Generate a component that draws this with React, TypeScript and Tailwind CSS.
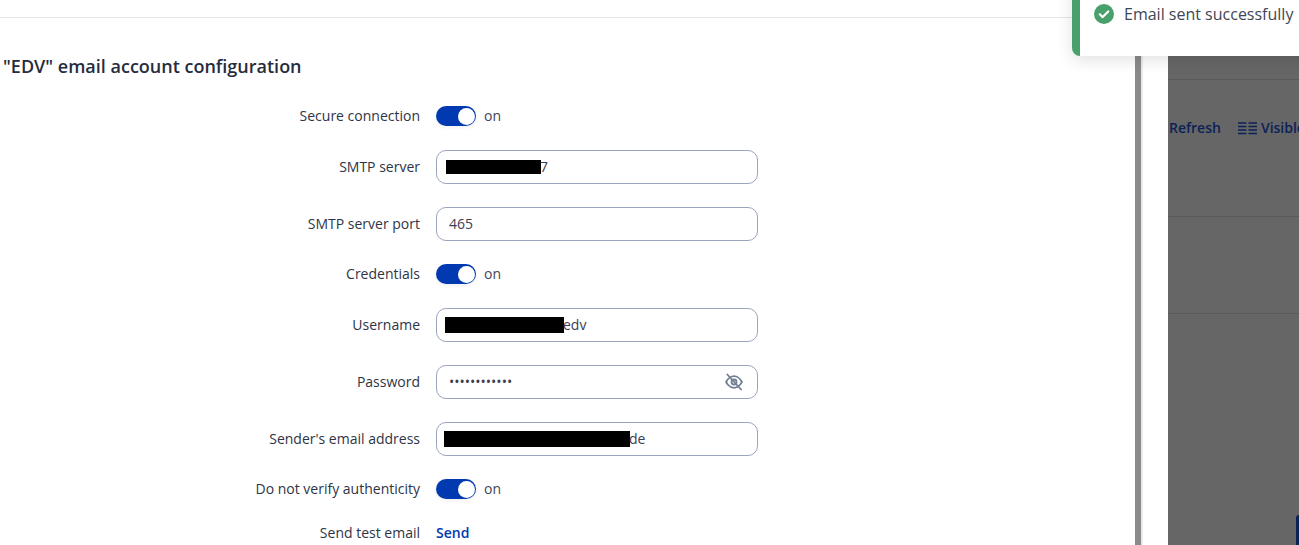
import React from "react";

const font = { fontFamily: '"Open Sans", "Noto Sans", sans-serif' };

function Row({ label, mt, children }: { label: string; mt: string; children: React.ReactNode }) {
  return (
    <div className={`flex items-center ${mt}`}>
      <div className="w-[420px] shrink-0 whitespace-nowrap text-right text-[14px] leading-[20px] text-[#2e3445]">{label}</div>
      <div className="ml-4 flex items-center">{children}</div>
    </div>
  );
}

function Toggle() {
  return (
    <div className="flex items-center">
      <div className="flex h-[20px] w-[40px] items-center justify-end rounded-full bg-[#0039b0] pr-[1px] shadow-[0_2px_4px_rgba(0,0,0,0.06)]">
        <div className="h-[17px] w-[17px] rounded-full bg-white" />
      </div>
      <span className="ml-2 text-[14px] leading-[20px] text-[#3f4656]">on</span>
    </div>
  );
}

function Field({ children }: { children?: React.ReactNode }) {
  return (
    <div className="flex h-[34px] w-[322px] items-center rounded-[10px] border border-[#9aa5bd] bg-white pb-[1px] text-[14px] text-[#3a4050]">
      {children}
    </div>
  );
}

function Redact({ width, ml, h }: { width: string; ml: string; h: string }) {
  return <div className={`${width} ${ml} ${h} mt-[1px] bg-black`} />;
}

export default function App() {
  return (
    <div style={font} className="relative flex h-[545px] w-[1299px] overflow-hidden bg-white">
      <div className="w-[1135px] shrink-0">
        <div className="h-[18px] border-b border-[#e4e4e6]" />
        <h2 className="ml-[3px] mt-[37px] h-[23px] text-[18px] font-semibold leading-[23px] text-[#262c3d]">
          "EDV" email account configuration
        </h2>
        <div className="mt-[28px]">
          <Row label="Secure connection" mt="mt-0"><Toggle /></Row>
          <Row label="SMTP server" mt="mt-[24px]">
            <Field>
              <Redact width="w-[95px]" ml="ml-[9px]" h="h-[14px]" />
              <span className="-ml-[1px]">7</span>
            </Field>
          </Row>
          <Row label="SMTP server port" mt="mt-[23px]">
            <Field><span className="ml-3">465</span></Field>
          </Row>
          <Row label="Credentials" mt="mt-[23px]"><Toggle /></Row>
          <Row label="Username" mt="mt-[24px]">
            <Field>
              <Redact width="w-[119px]" ml="ml-[8px]" h="h-[16px]" />
              <span className="-ml-[1px]">edv</span>
            </Field>
          </Row>
          <Row label="Password" mt="mt-[23px]">
            <Field>
              <span className="ml-3 flex-1 text-[14px]">••••••••••••</span>
              <svg className="mr-[13px] mt-[1px]" width="20" height="20" viewBox="0 0 24 24" fill="none" stroke="#737f94" strokeWidth="2.2" strokeLinecap="round" strokeLinejoin="round">
                <path d="M2.5 12s3.5-7 9.5-7 9.5 7 9.5 7-3.5 7-9.5 7-9.5-7-9.5-7Z" />
                <circle cx="12" cy="12" r="3" />
                <path d="M4 3l16.5 18" />
              </svg>
            </Field>
          </Row>
          <Row label="Sender's email address" mt="mt-[23px]">
            <Field>
              <Redact width="w-[186px]" ml="ml-[7px]" h="h-[16px]" />
              <span className="-ml-[1px]">de</span>
            </Field>
          </Row>
          <Row label="Do not verify authenticity" mt="mt-[23px]"><Toggle /></Row>
          <Row label="Send test email" mt="mt-[24px]">
            <span className="text-[14px] font-semibold leading-[20px] text-[#0039b0]">Send</span>
          </Row>
        </div>
      </div>

      <div className="w-[6px] shrink-0 bg-[#8a8a8a]" />
      <div className="w-[27px] shrink-0 border-l-2 border-[#e6ecee] bg-white" />

      <div className="min-w-0 flex-1 overflow-hidden bg-[#666666]">
        <div className="h-[80px] border-b border-[#5a5a5a]" />
        <div className="flex h-[137px] items-start border-b border-[#5a5a5a] pt-[38px] text-[14px] font-semibold leading-[20px] text-[#0b2257]">
          <span className="ml-[1px] whitespace-nowrap">Refresh</span>
          <svg className="ml-[17px] mt-[3px] shrink-0" width="19" height="14" viewBox="0 0 19 14" stroke="#0b2257" strokeWidth="1.6" fill="none">
            <path d="M0 2h8.5M0 5.5h8.5M0 9h8.5M0 12.5h8.5M10.5 2h8.5M10.5 5.5h8.5M10.5 9h8.5M10.5 12.5h8.5" />
          </svg>
          <span className="ml-[4px] whitespace-nowrap">Visible</span>
        </div>
        <div className="h-[97px] border-b border-[#5a5a5a]" />
      </div>

      <div className="absolute bottom-0 right-0 top-[515px] w-[3px] rounded-tl-[3px] bg-[#0b2257]" />

      <div className="absolute left-[1072px] top-[-20px] flex h-[76px] w-[260px] rounded-[8px] border-l-[8px] border-[#4aa06c] bg-white shadow-[0_4px_16px_rgba(0,0,0,0.12)]">
        <div className="ml-[14px] mt-[24px] flex items-start">
          <svg width="20" height="20" viewBox="0 0 20 20" className="shrink-0">
            <circle cx="10" cy="10" r="10" fill="#4aa06c" />
            <path d="M5.8 10.3l2.9 2.8 5.5-5.6" fill="none" stroke="#fff" strokeWidth="2.2" strokeLinecap="round" strokeLinejoin="round" />
          </svg>
          <span className="ml-[10px] whitespace-nowrap text-[16px] leading-[20px] text-[#3f4656]">Email sent successfully</span>
        </div>
      </div>
    </div>
  );
}
